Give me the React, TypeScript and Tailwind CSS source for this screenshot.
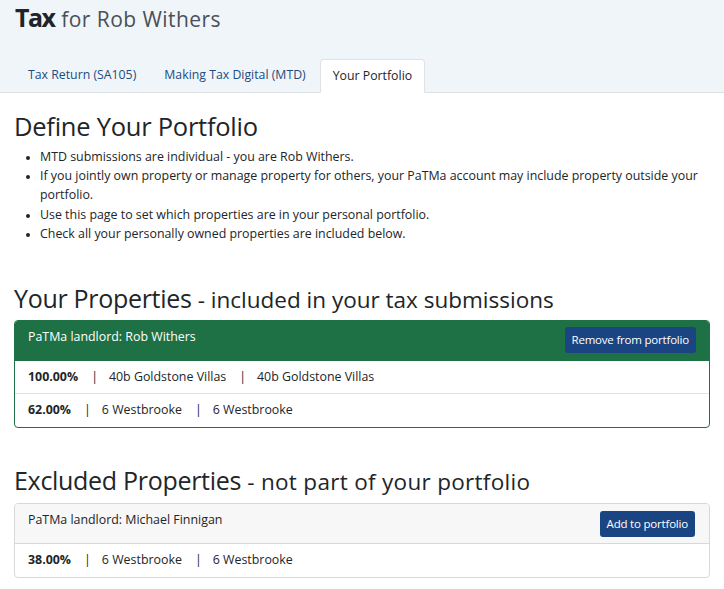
import React from 'react';

type Holding = { share: string; name: string; address: string };

const ownHoldings: Holding[] = [
  { share: '100.00%', name: '40b Goldstone Villas', address: '40b Goldstone Villas' },
  { share: '62.00%', name: '6 Westbrooke', address: '6 Westbrooke' },
];

const otherHoldings: Holding[] = [
  { share: '38.00%', name: '6 Westbrooke', address: '6 Westbrooke' },
];

const HoldingRow = ({ item, last }: { item: Holding; last: boolean }) => (
  <div className={`flex items-center h-[33px] px-[13px] text-[12.4px] text-[#212529] ${last ? 'h-[32px]' : 'border-b border-[#dee2e6]'}`}>
    <span className="font-bold">{item.share}</span>
    <span className="ml-[13px] mr-[11px] text-[#212529]">|</span>
    <span>{item.name}</span>
    <span className="ml-[13px] mr-[11px] text-[#212529]">|</span>
    <span>{item.address}</span>
  </div>
);

const App = () => {
  return (
    <div className="min-h-[589px] bg-white text-[#212529]" style={{ fontFamily: '"Open Sans", "Noto Sans", sans-serif' }}>
      {/* page header with tabs */}
      <div className="bg-[#f0f5fa] border-b border-[#dee2e6]">
        <h1 className="pl-[15px] h-[59px] leading-[34px] whitespace-nowrap">
          <span className="text-[25px] font-bold tracking-[-1.6px]">Tax</span>
          <span className="ml-[7px] text-[21px] font-medium tracking-[0.45px] text-[#4a5056]">for Rob Withers</span>
        </h1>
        <div className="flex items-end pl-[14px] h-[33px] text-[12.3px]">
          <a className="px-[14px] h-[33px] flex items-center text-[#1c4c80]">Tax Return (SA105)</a>
          <a className="px-[14px] h-[33px] flex items-center text-[#1c4c80]">Making Tax Digital (MTD)</a>
          <a className="px-[12px] h-[34px] flex items-center bg-white border border-[#dee2e6] border-b-white rounded-t-[4px] -mb-px text-[#212529]">
            Your Portfolio
          </a>
        </div>
      </div>

      <div className="px-[14px]">
        <h2 className="mt-[18px] text-[25.5px] leading-[30px] tracking-[-0.25px]">Define Your Portfolio</h2>
        <ul className="mt-[6px] list-disc pl-[26px] text-[12.4px] leading-[19.2px] marker:text-[10px]">
          <li>MTD submissions are individual - you are Rob Withers.</li>
          <li>If you jointly own property or manage property for others, your PaTMa account may include property outside your portfolio.</li>
          <li>Use this page to set which properties are in your personal portfolio.</li>
          <li>Check all your personally owned properties are included below.</li>
        </ul>

        <h2 className="mt-[40px] text-[25px] leading-[30px] tracking-[-0.3px] whitespace-nowrap">
          Your Properties <span className="text-[22.5px] tracking-normal">- included in your tax submissions</span>
        </h2>
        <div className="mt-[5px] border border-[#1e7145] rounded-[4px] overflow-hidden">
          <div className="flex items-start justify-between h-[40px] pl-[13px] pr-[13px] bg-[#1e7145] text-white text-[12.4px] border-b border-[#1e7145]">
            <span className="pt-[7px]">PaTMa landlord: Rob Withers</span>
            <button className="mt-[6px] h-[26px] px-[7px] rounded-[3px] bg-[#1b4582] text-white text-[11.5px] tracking-[-0.2px]">Remove from portfolio</button>
          </div>
          {ownHoldings.map((h, i) => (
            <HoldingRow key={i} item={h} last={i === ownHoldings.length - 1} />
          ))}
        </div>

        <h2 className="mt-[37px] text-[25px] leading-[30px] tracking-[-0.3px] whitespace-nowrap">
          Excluded Properties <span className="text-[22.5px] tracking-[0.3px]">- not part of your portfolio</span>
        </h2>
        <div className="mt-[6px] border border-[#d6d8db] rounded-[4px] overflow-hidden">
          <div className="flex items-start justify-between h-[40px] pl-[13px] pr-[14px] bg-[#f7f7f7] text-[12.4px] border-b border-[#d6d8db]">
            <span className="pt-[7px]">PaTMa landlord: Michael Finnigan</span>
            <button className="mt-[7px] h-[26px] px-[7px] rounded-[3px] bg-[#1b4582] text-white text-[11.5px] tracking-[-0.2px]">Add to portfolio</button>
          </div>
          {otherHoldings.map((h, i) => (
            <HoldingRow key={i} item={h} last={i === otherHoldings.length - 1} />
          ))}
        </div>
      </div>
    </div>
  );
};

export default App;
